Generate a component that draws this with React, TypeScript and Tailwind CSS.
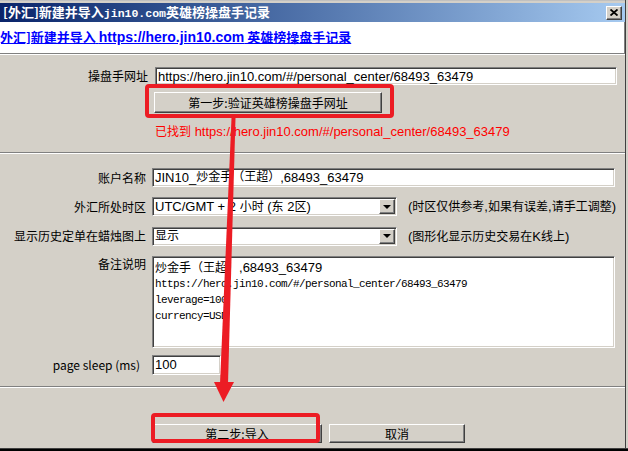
import React from "react";

// classic win32 bevels
const sunken =
	"bg-white border border-t-[#808080] border-l-[#808080] border-b-white border-r-white shadow-[inset_1px_1px_0_#404040,inset_-1px_-1px_0_#d4d0c8]";
const raised =
	"bg-[#d4d0c8] border border-t-white border-l-white border-b-[#404040] border-r-[#404040] shadow-[inset_-1px_-1px_0_#808080]";

const sans = "font-['Liberation_Sans','Noto_Sans_CJK_SC',sans-serif]";
const cjk = "font-['Noto_Sans_CJK_SC','Liberation_Sans',sans-serif]";
const mono = "font-['Liberation_Mono','Noto_Sans_CJK_SC',monospace]";

// wrap CJK runs so they render at 12px next to 13px latin text
function Mixed({ text }: { text: string }) {
	const parts = text.split(/([\u3000-\u9fff\uff00-\uffef]+)/);
	return (
		<>
			{parts.map((p, i) =>
				/[\u3000-\u9fff\uff00-\uffef]/.test(p) ? (
					<span key={i} className="text-[12px]">
						{p}
					</span>
				) : (
					<span key={i}>{p}</span>
				),
			)}
		</>
	);
}

function Separator() {
	return <div className="h-[2px] border-t border-t-[#808080] border-b border-b-white" />;
}

function Label({ children, className = "" }: { children: React.ReactNode; className?: string }) {
	return (
		<div className={`text-right text-[12px] leading-[14px] text-black ${cjk} ${className}`}>
			{children}
		</div>
	);
}

function Select({ value }: { value: string }) {
	return (
		<div className={`${sunken} relative flex h-[19px] w-[245px] items-center pl-[2px] text-[13px] ${sans}`}>
			<span className="leading-[15px]">
				<Mixed text={value} />
			</span>
			<div className={`${raised} absolute right-[1px] top-[1px] flex h-[15px] w-[16px] items-center justify-center`}>
				<div className="h-0 w-0 border-x-[4px] border-t-[4px] border-x-transparent border-t-black" />
			</div>
		</div>
	);
}

function Note({ text }: { text: string }) {
	return (
		<span className={`ml-[11px] text-[13px] ${sans}`}>
			<Mixed text={text} />
		</span>
	);
}

export default function App() {
	const url = "https://hero.jin10.com/#/personal_center/68493_63479";
	return (
		<div className="relative h-[451px] w-[628px] overflow-hidden bg-[#d4d0c8]">
			<div className="flex h-[448px] w-[626px] flex-col border-r border-r-[#404040]">
				<div className="h-[3px] border-t border-t-[#c0c0c0]" />

				{/* title bar */}
				<div className="flex h-[19px] items-center justify-between bg-gradient-to-r from-[#0a246a] to-[#a6caf0] pl-[3px] pr-[3px]">
					<span className={`text-[13px] font-bold leading-[15px] text-white ${cjk}`}>
						[外汇]新建并导入
						<span className={`${mono} text-[11.5px]`}>jin10.com</span>
						英雄榜操盘手记录
					</span>
					<div className={`${raised} flex h-[14px] w-[16px] items-center justify-center`}>
						<svg width="8" height="7" viewBox="0 0 8 7">
							<path d="M0.5 0.5 L7.5 6.5 M7.5 0.5 L0.5 6.5" stroke="#000" strokeWidth="1.8" />
						</svg>
					</div>
				</div>

				{/* header link */}
				<div className="flex h-[31px] items-center border-r border-r-[#808080] bg-white">
					<span className={`ml-[-5px] text-[13px] font-bold text-[#0000ff] underline ${cjk}`}>
						[外汇]新建并导入{" "}
						<span className={`${sans} text-[14px]`}>https://hero.jin10.com</span> 英雄榜操盘手记录
					</span>
				</div>
				<Separator />

				{/* step 1 */}
				<div className="grid grid-cols-[148px_1fr] gap-x-[7px] pb-[13px] pt-[12px]">
					<Label className="self-center">操盘手网址</Label>
					<div className={`${sunken} flex h-[18px] w-[462px] items-center pl-[2px] text-[13px] leading-[15px] ${sans}`}>
						{url}
					</div>
					<div />
					<div className={`${raised} ml-[-1px] mt-[7px] flex h-[21px] w-[228px] items-center justify-center text-[12px] ${cjk}`}>
						第一步:验证英雄榜操盘手网址
					</div>
					<div />
					<div className={`mt-[12px] text-[13px] leading-[13px] text-[#ff0000] ${sans}`}>
						<span className="text-[12px]">已找到</span> {url}
					</div>
				</div>
				<Separator />

				{/* details */}
				<div className="flex flex-col gap-[10px] pb-[11px] pt-[14px]">
					<div className="grid grid-cols-[146px_1fr] items-center gap-x-[6px]">
						<Label>账户名称</Label>
						<div className={`${sunken} flex h-[19px] w-[463px] items-center pl-[2px] text-[13px] leading-[15px] ${sans}`}>
							<Mixed text="JIN10_炒金手（王超）,68493_63479" />
						</div>
					</div>
					<div className="grid grid-cols-[146px_1fr] items-center gap-x-[6px]">
						<Label>外汇所处时区</Label>
						<div className="flex items-center">
							<Select value="UTC/GMT + 2 小时 (东 2区)" />
							<Note text="(时区仅供参考,如果有误差,请手工调整)" />
						</div>
					</div>
					<div className="grid grid-cols-[146px_1fr] items-center gap-x-[6px]">
						<Label>显示历史定单在蜡烛图上</Label>
						<div className="flex items-center">
							<Select value="显示" />
							<Note text="(图形化显示历史交易在K线上)" />
						</div>
					</div>
					<div className="grid grid-cols-[146px_1fr] items-start gap-x-[6px]">
						<Label className="pt-[1px]">备注说明</Label>
						<div className={`${sunken} h-[92px] w-[463px] pl-[2px] pt-[3px] leading-[16px]`}>
							<div className={`text-[13px] ${sans}`}>
								<Mixed text="炒金手（王超）,68493_63479" />
							</div>
							<div className={`${mono} text-[11px] tracking-[-0.6px]`}>{url}</div>
							<div className={`${mono} text-[11px] tracking-[-0.6px]`}>leverage=100</div>
							<div className={`${mono} text-[11px] tracking-[-0.6px]`}>currency=USD</div>
						</div>
					</div>
					<div className="mt-[-3px] grid grid-cols-[146px_1fr] items-center gap-x-[6px]">
						<Label className={`pr-[6px] ${sans}`}>page sleep (ms)</Label>
						<div className={`${sunken} flex h-[20px] w-[69px] items-center pl-[2px] text-[13px] ${sans}`}>100</div>
					</div>
				</div>
				<Separator />

				{/* footer */}
				<div className="flex gap-[7px] pl-[152px] pt-[36px]">
					<div className={`${raised} flex h-[19px] w-[170px] items-center justify-center text-[12px] ${cjk}`}>
						第二步:导入
					</div>
					<div className={`${raised} flex h-[19px] w-[136px] items-center justify-center text-[12px] ${cjk}`}>
						取消
					</div>
				</div>
			</div>
			<div className="h-[3px] w-[628px] border-t border-t-[#404040] bg-black" />

			{/* red annotations drawn over the dialog */}
			<svg className="pointer-events-none absolute left-0 top-0" width="628" height="451">
				<rect x="147" y="86" width="245" height="30" rx="2" fill="none" stroke="#ec1c24" strokeWidth="4" />
				<rect x="153" y="415" width="165" height="26" rx="2" fill="none" stroke="#ec1c24" strokeWidth="4" />
				<polygon points="231.5,118 235.5,118 228,384 220,384" fill="#ec1c24" />
				<polygon points="214,382 234,382 223.5,402" fill="#ec1c24" />
			</svg>
		</div>
	);
}
